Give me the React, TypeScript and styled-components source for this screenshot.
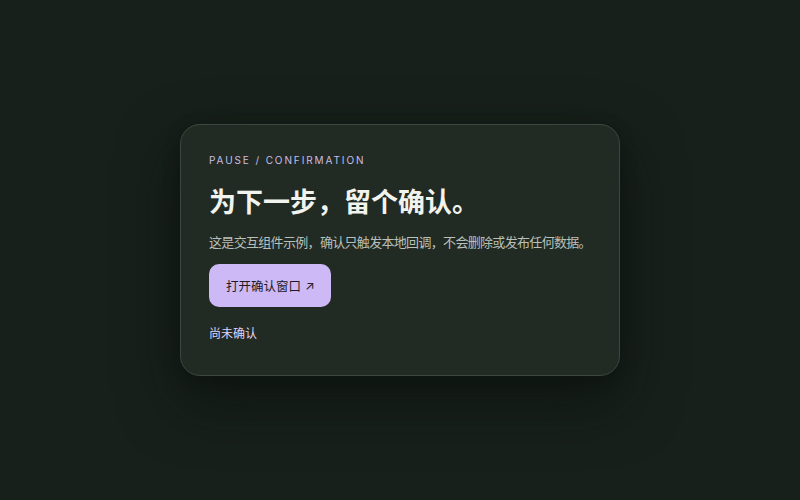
import React, { useState } from "react";
import styled, { createGlobalStyle } from "styled-components";

const Global = createGlobalStyle`
  html, body { margin: 0; padding: 0; background: #18201b; }
  body { font-family: Inter, "Noto Sans CJK SC", sans-serif; }
`;

const Page = styled.div`
  width: 800px;
  height: 500px;
  display: flex;
  align-items: center;
  justify-content: center;
  background: #18201b;
`;

const Card = styled.section`
  box-sizing: border-box;
  width: 440px;
  height: 252px;
  padding: 28px 28px 0 28px;
  background: #222a24;
  border: 1px solid #3d463f;
  border-radius: 20px;
  box-shadow: 0 24px 60px rgba(8, 12, 10, 0.55), 0 4px 16px rgba(8, 12, 10, 0.3);
  display: flex;
  flex-direction: column;
  align-items: flex-start;
`;

const Eyebrow = styled.div`
  font-family: Inter, sans-serif;
  font-size: 10px;
  line-height: 14px;
  letter-spacing: 1.9px;
  color: #c8bfe6;
  text-transform: uppercase;
`;

const Title = styled.h1`
  margin: 18px 0 0 0;
  font-family: Inter, "Noto Sans CJK SC", sans-serif;
  font-size: 27px;
  line-height: 36px;
  font-weight: 700;
  color: #f1f3ee;
  white-space: nowrap;
`;

const Desc = styled.p`
  margin: 11px 0 0 0;
  font-family: Inter, "Noto Sans CJK SC", sans-serif;
  font-size: 13px;
  line-height: 20px;
  letter-spacing: -0.68px;
  color: #b9c0ba;
  white-space: nowrap;
`;

const Button = styled.button`
  margin-top: 12px;
  box-sizing: border-box;
  height: 43px;
  padding: 0 16px 0 17px;
  border: none;
  border-radius: 10px;
  background: #cdb9f6;
  color: #1d1a24;
  font-family: Inter, "Noto Sans CJK SC", sans-serif;
  font-size: 12.5px;
  display: flex;
  align-items: center;
  gap: 4px;
  cursor: pointer;
`;

const Status = styled.div`
  margin-top: 18px;
  font-family: Inter, "Noto Sans CJK SC", sans-serif;
  font-size: 12px;
  line-height: 18px;
  color: #e0d6f8;
`;

export default function App() {
  const [confirmed] = useState(false);
  return (
    <Page>
      <Global />
      <Card>
        <Eyebrow>Pause / Confirmation</Eyebrow>
        <Title>为下一步，留个确认。</Title>
        <Desc>这是交互组件示例，确认只触发本地回调，不会删除或发布任何数据。</Desc>
        <Button type="button">
          打开确认窗口 <span>↗</span>
        </Button>
        <Status>{confirmed ? "已确认" : "尚未确认"}</Status>
      </Card>
    </Page>
  );
}
